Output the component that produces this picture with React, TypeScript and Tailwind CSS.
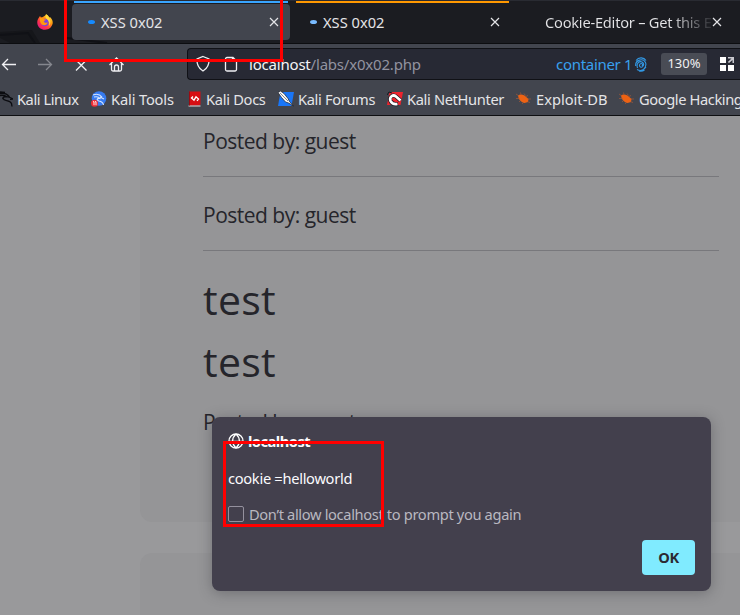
import React from "react";

const Spinner = ({ className }: { className: string }) => (
  <span className={`block h-1 w-[7px] shrink-0 rounded-[50%] ${className}`} />
);

const Close = () => (
  <svg className="block size-[10px] shrink-0" viewBox="0 0 10 10" fill="none" stroke="#e4e4e7" strokeWidth="1.2">
    <path d="M1 1l8 8M9 1L1 9" />
  </svg>
);

const Firefox = () => (
  <svg className="ml-[37px] mt-[14px] block size-4 shrink-0" viewBox="0 0 16 16">
    <defs>
      <linearGradient id="flame" x1="1" y1="0" x2="0.2" y2="1">
        <stop offset="0" stopColor="#fff44f" />
        <stop offset=".4" stopColor="#ff980e" />
        <stop offset=".7" stopColor="#ff3647" />
        <stop offset="1" stopColor="#e31587" />
      </linearGradient>
    </defs>
    <path d="M2 3.5L3 2l1 1.500 2-.5C7 1.500 9 2 9 .2c2 .8 2.500 2 3 3.300l1-.5c2 2 3 4 2.700 6.300C15 13 12 15.800 8 15.800S.6 13 .3 9C.2 7 .7 5 2 3.500z" fill="url(#flame)" />
    <circle cx="8" cy="8.500" r="3.700" fill="#7542e5" />
    <path d="M3 4c2-.6 3 .2 4 1.200l2 .2c-.3 1-2 1.200-2.300 2.200.8 1.500 3 1.500 4 .6-.4 3-4 4-6.200 2C3 8.500 2.500 6 3 4z" fill="#ff980e" />
    <path d="M9 .2c2 .8 2.500 2 3 3.300 2 2.500 2 6 .2 8.500.4-4-.7-5.500-2.200-6.800C8.500 4 8 2 9 .2z" fill="#ffd83a" />
  </svg>
);

const Dragon = () => (
  <svg className="block h-4 w-[13px] shrink-0" viewBox="0 0 13 16" fill="none" stroke="#0b0c10" strokeWidth="1.300">
    <path d="M0 2.500c4-.8 7 .2 9.500 3.500M0 4.500c3-.6 5-.2 7 1.500M0 1l5 .5M3 8c-1-2 3-3.500 7-1.500l3 1.500-3 .4M3 7.500c1 3 7 1 8.500 5l.5 3" />
  </svg>
);

const Tools = () => (
  <svg className="block size-4 shrink-0" viewBox="0 0 16 16">
    <circle cx="8" cy="7.500" r="7.300" fill="#367bf0" />
    <path d="M2 4c4-1.500 7-.5 9 2M3 6c3-.7 5 0 6 1.500-3-.5-4 1.500-1 2.500 3 .6 4 1.500 4.500 4M9 6l4 2" fill="none" stroke="#d7e6ff" strokeWidth="1.100" />
    <circle cx="3.500" cy="12.200" r="3.500" fill="#f12d35" />
    <path d="M2 10.700h1v3.500M4 10.700h1v3.500" fill="none" stroke="#fff" strokeWidth=".9" />
  </svg>
);

const Docs = () => (
  <svg className="block h-4 w-[13px] shrink-0" viewBox="0 0 13 16">
    <path d="M1 .5h11.500v13L11 14.500H1z" fill="#d70e13" />
    <path d="M.5 14.500h12v1H.5z" fill="#e5dcdc" />
    <path d="M1 .5h1v14H1z" fill="#9b0b12" />
    <path d="M5 5.500L3.500 7 6 9.200l2-3.400L10.500 8 9 9.800" fill="none" stroke="#fff" strokeWidth="1.300" />
  </svg>
);

const Forums = () => (
  <svg className="block size-4 shrink-0" viewBox="0 0 16 16">
    <path d="M2.500 1H16l-2.500 14H0z" fill="#1976f8" />
    <path d="M0 1.500L2.500 0l3.500 2.500 4 5 1.500 3L15.500 15l-5-3-3-1-4-4.500z" fill="#f7f7f7" stroke="#161b26" strokeWidth=".7" />
    <path d="M2 2l8 8" stroke="#343943" strokeWidth=".6" />
  </svg>
);

const NetHunter = () => (
  <svg className="block size-4 shrink-0" viewBox="0 0 16 16">
    <path d="M2.500 1H16l-2.500 13H0z" fill="#ee232d" />
    <path d="M13.500 9.500L9 5.500C6 3 1.500 6 3.500 10c1.500 3 5 3.500 7.500 3" fill="none" stroke="#141820" strokeWidth="4" />
    <path d="M13.500 9.500L9 5.500C6 3 2 6 3.500 10c1.500 3 4.500 3.500 7 3" fill="none" stroke="#fff" strokeWidth="2.700" />
    <path d="M0 4l2-3 3 1" fill="none" stroke="#141820" />
  </svg>
);

const Exploit = () => (
  <svg className="block h-[13px] w-[15px] shrink-0" viewBox="0 0 15 13">
    <path d="M2 3.500C3.500 2 6 2 8.500 3.500L12.500 7l-.5 3-3.500 1C5.500 10.500 2.500 8 2 3.500z" fill="#ed6213" />
    <path d="M0 2l3 2M4.500.5l.5 2M8 1.500l1.500 2M0 6.500h4M3 10l2-2M6 12l2-2M10 4.500l2-1M11.500 7H15M11 9.500l3 1" stroke="#b55a34" strokeWidth=".6" />
  </svg>
);

const bookmarks: { label: string; icon: React.ReactNode; box: string; text: string }[] = [
  { label: "Kali Linux", icon: <Dragon />, box: "w-[91px] gap-1", text: "tracking-[-0.45px]" },
  { label: "Kali Tools", icon: <Tools />, box: "w-[97px] gap-1", text: "tracking-[-0.15px]" },
  { label: "Kali Docs", icon: <Docs />, box: "w-[90px] gap-[5px]", text: "tracking-[-0.3px]" },
  { label: "Kali Forums", icon: <Forums />, box: "w-[109px] gap-1", text: "tracking-[-0.35px]" },
  { label: "Kali NetHunter", icon: <NetHunter />, box: "w-[129px] gap-1", text: "tracking-[-0.35px]" },
  { label: "Exploit-DB", icon: <Exploit />, box: "w-[103px] gap-[5px]", text: "tracking-normal" },
  { label: "Google Hacking", icon: <Exploit />, box: "w-[140px] gap-[5px]", text: "tracking-[-0.4px]" },
];

const TabBar = () => (
  <div className="relative flex h-11 items-start overflow-hidden border-b border-[#0c0d10] bg-[#1b1c21]">
    <svg className="absolute inset-0" width="740" height="43">
      <path d="M0 32l32-2 8 13H10L0 38z" fill="#15161a" />
      <path d="M0 35l28-2 7 10M67 38l40 5" fill="none" stroke="#101116" strokeWidth="2" />
      <path d="M0 .5h740" stroke="#292b32" />
    </svg>
    <div className="relative flex w-[72px] shrink-0"><Firefox /></div>
    <div className="relative w-[218px] shrink-0 pt-px">
      <div className="mx-0.5 h-0.5 bg-[#39a5ff]" />
      <div className="mt-px flex h-9 items-center rounded bg-[#42454e] pl-4 pr-[11px]">
        <Spinner className="bg-[#168bff]" />
        <span className="ml-1.5 flex-1 text-[14.67px] leading-5 text-[#e4e4e7]">XSS 0x02</span>
        <Close />
      </div>
    </div>
    <div className="relative ml-1.5 w-[213px] shrink-0 pt-px">
      <div className="h-0.5 bg-[#ff9800]" />
      <div className="mt-px flex h-9 items-center pl-3.5 pr-[9px]">
        <Spinner className="bg-[#79bbff]" />
        <span className="ml-1.5 flex-1 text-[14.67px] leading-5 text-[#e4e4e7]">XSS 0x02</span>
        <Close />
      </div>
    </div>
    <div className="relative ml-9 mt-1 flex h-9 shrink-0 items-center">
      <div className="w-[167px] overflow-hidden whitespace-nowrap bg-linear-to-r from-[#e4e4e7] from-75% to-[#2c2d32] bg-clip-text text-[14.67px] leading-5 tracking-[-0.24px] text-transparent">Cookie-Editor – Get this Extension</div>
      <Close />
    </div>
  </div>
);

const NavBar = () => (
  <div className="flex h-9 items-end">
    <svg className="mb-px block h-8 w-[187px] shrink-0" viewBox="0 0 187 32" fill="none" stroke="#f0f0f3" strokeWidth="1.300">
      <path d="M16 17.500H2.500M8 12l-5.500 5.500L8 23" />
      <path d="M38 17.500h13.500M46 12l5.500 5.500L46 23" stroke="#85878e" />
      <path d="M76 13l10.500 10.500M86.500 13L76 23.500" />
      <path d="M109.500 18l7-7 7 7M111.500 16.500v6a1.500 1.500 0 001.500 1.500h7a1.500 1.500 0 001.500-1.500v-6M114.500 24v-4a2 2 0 014 0v4" />
    </svg>
    <div className="flex h-8 flex-1 items-center rounded-l border border-r-0 border-[#101116] bg-[#272934]">
      <svg className="block h-[18px] w-[54px] shrink-0" viewBox="0 0 54 18" fill="none" stroke="#f0f0f3" strokeWidth="1.300">
        <path d="M15 1.500l6 2.500c.3 5-1 9-6 12-5-3-6.300-7-6-12z" />
        <path d="M39 2.500h6l3.500 3.500v8.500a1.500 1.500 0 01-1.500 1.500h-8a1.500 1.500 0 01-1.500-1.500V4A1.500 1.500 0 0139 2.500zM44.500 2.500V6h4" />
      </svg>
      <span className="ml-[7px] w-[307px] shrink-0 text-[15px] leading-5 tracking-[-0.2px] text-[#9293a0]"><span className="text-[#f4f4f7]">localhost</span>/labs/x0x02.php</span>
      <span className="w-[79px] shrink-0 whitespace-nowrap text-[15px] leading-5 tracking-[-0.3px] text-[#39a0ed]">container 1</span>
      <svg className="block h-[15px] w-3 shrink-0" viewBox="0 0 12 15" fill="none" stroke="#3298e4" strokeWidth="1.100">
        <path d="M1 3.500c3-4 8-3 10 0M.7 9C0 3 8 .5 10.500 5.500c1.200 3-.5 5.500-2 7M2.500 11C1 6.500 4 3.700 7 5c3.500 2 .5 6-1.500 5-1.800-1-1-3.500.8-3.500s1.500 2 .5 2.200M2 12.500c3.500 2 7 .5 9-2.500M4 14c2 .5 4 .2 5.500-1" />
      </svg>
      <span className="ml-3.5 flex h-[22px] w-[46px] shrink-0 items-center justify-center rounded-[3px] bg-[#494c55] text-[13px] text-[#f0f0f2]">130%</span>
      <svg className="ml-[13px] block h-[15px] w-[15px] shrink-0" viewBox="0 0 15 15">
        <path d="M0 0h6v6H0zM0 8h6v6H0zM8 8h6v6H8z" fill="#fff" />
        <path d="M8 0h6v6h-1.500V3L9 6 7.800 5 11.500 1.500H8z" fill="#c9c9d0" />
      </svg>
    </div>
  </div>
);

const Post = () => (
  <div className="h-[74px] border-b border-[#78787c] pt-[13px] text-[21px] leading-[50px] tracking-[-0.5px] text-[#25252b]">Posted by: guest</div>
);

const Page = () => (
  <div className="h-[499px] overflow-hidden bg-[#99999b] pl-[140px] font-['Open_Sans',sans-serif]">
    <div className="flex h-[406px] flex-col rounded-bl-xl bg-[#959597] pl-[63px] pr-[21px]">
      <div className="-mt-[13px]"><Post /></div>
      <Post />
      <h1 className="pt-[17px] text-[41px] leading-[62px] tracking-[0.3px] text-[#25252b]">test</h1>
      <h1 className="text-[41px] leading-[62px] tracking-[0.3px] text-[#25252b]">test</h1>
      <p className="pt-3.5 text-[21px] leading-[32px] tracking-[-0.5px] text-[#25252b]">Posted by: guest</p>
    </div>
    <div className="mt-[31px] h-24 rounded-tl-xl bg-[#959597]" />
  </div>
);

const Dialog = () => (
  <div className="absolute left-[212px] top-[417px] flex h-[174px] w-[499px] flex-col rounded-lg bg-[#43404d] px-4 pt-3.5 text-[14.67px] leading-5 text-[#fbfbfe] shadow-[0_2px_14px_rgba(40,40,45,0.35)]">
    <div className="flex h-5 items-center gap-1 font-bold">
      <svg className="block size-4" viewBox="0 0 16 16" fill="none" stroke="#fff" strokeWidth="1.300">
        <circle cx="8" cy="8" r="7" />
        <path d="M1.500 8.500h13M8 1C3.500 5 3.500 11 8 15M8 1c4.500 4 4.500 10 0 14" />
      </svg>
      <span className="tracking-[-0.5px]">localhost</span>
    </div>
    <div className="mt-[17px] tracking-[-0.3px]">cookie =helloworld</div>
    <div className="mt-4 flex h-5 items-center gap-[5px] text-[#b9b8c0]">
      <span className="size-4 rounded-[2px] border border-[#94919e]" />
      <span className="tracking-[-0.35px]">Don’t allow localhost to prompt you again</span>
    </div>
    <button className="mt-4 h-[35px] w-[53px] self-end rounded bg-[#80ebff] pb-0.5 font-bold tracking-[-0.4px] text-[#2b2a33]">OK</button>
  </div>
);

export default function App() {
  return (
    <div className="relative h-[615px] w-[740px] overflow-hidden bg-[#42454e] font-['Noto_Sans',sans-serif]">
      <TabBar />
      <NavBar />
      <div className="flex h-9 items-center overflow-hidden border-b border-[#0e0f12] pt-0.5 text-[14.67px] text-[#e4e4e7]">
        {bookmarks.map((b) => (
          <div key={b.label} className={`flex shrink-0 items-center whitespace-nowrap ${b.box}`}>{b.icon}<span className={b.text}>{b.label}</span></div>
        ))}
      </div>
      <Page />
      <Dialog />
      <div className="absolute -top-1 left-16 h-[66px] w-[219px] border-3 border-[#f00]" />
      <div className="absolute left-[223px] top-[441px] h-[86px] w-[161px] border-3 border-[#f00]" />
    </div>
  );
}
